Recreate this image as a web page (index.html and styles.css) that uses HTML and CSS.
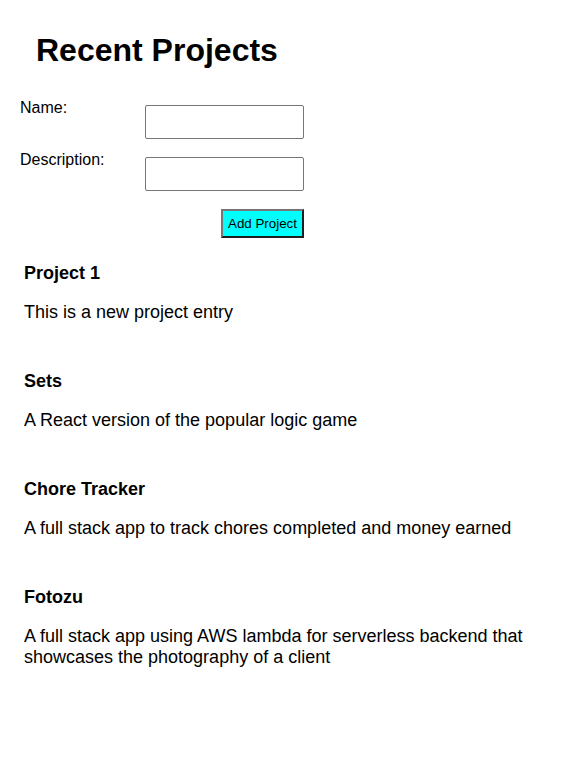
FILE: index.html
```html
<!DOCTYPE html>
<html>
<head>
<meta charset="utf-8">
<title>Recent Projects</title>
<link rel="stylesheet" href="styles.css">
</head>
<body>
<div class="app">
  <h1 class="title">Recent Projects</h1>
  <form class="form">
    <div class="row">
      <label class="label" for="name">Name:</label>
      <input class="field" id="name" type="text">
    </div>
    <div class="row">
      <label class="label" for="desc">Description:</label>
      <input class="field" id="desc" type="text">
    </div>
    <div class="actions">
      <button class="add" type="button">Add Project</button>
    </div>
  </form>
  <div class="projects">
    <div class="project">
      <h3 class="project-name">Project 1</h3>
      <p class="project-desc">This is a new project entry</p>
    </div>
    <div class="project">
      <h3 class="project-name">Sets</h3>
      <p class="project-desc">A React version of the popular logic game</p>
    </div>
    <div class="project">
      <h3 class="project-name">Chore Tracker</h3>
      <p class="project-desc">A full stack app to track chores completed and money earned</p>
    </div>
    <div class="project">
      <h3 class="project-name">Fotozu</h3>
      <p class="project-desc">A full stack app using AWS lambda for serverless backend that showcases the photography of a client</p>
    </div>
  </div>
</div>
</body>
</html>
```

FILE: styles.css
```css
html, body {
  background: #ffffff;
}
body {
  margin: 8px;
  font-family: "Liberation Sans", Arial, sans-serif;
  color: #000000;
}
.app {
  display: flex;
  flex-direction: column;
}
.title {
  font-size: 32px;
  font-weight: bold;
  margin: 24px 0 0 28px;
}
.form {
  display: flex;
  flex-direction: column;
  margin: 30px 0 0 12px;
  width: 284px;
}
.row {
  display: flex;
  align-items: flex-start;
  height: 52px;
}
.label {
  width: 125px;
  font-size: 16px;
}
.field {
  box-sizing: border-box;
  width: 159px;
  height: 34px;
  margin: 6px 0 0 1px;
  border: 1px solid #767676;
  border-radius: 2px;
  padding: 1px 2px;
  font-family: "Liberation Sans", Arial, sans-serif;
  background: #fff;
}
.actions {
  display: flex;
  justify-content: flex-end;
  margin-top: 6px;
}
.add {
  box-sizing: border-box;
  width: 83px;
  height: 29px;
  padding: 0;
  background: #00ffff;
  border: 2px solid;
  border-color: #767676 #1f1f1f #1f1f1f #767676;
  font-family: "Liberation Sans", Arial, sans-serif;
  font-size: 13.33px;
  color: #000;
}
.projects {
  display: flex;
  flex-direction: column;
  gap: 48px;
  margin: 25px 16px 0 16px;
}
.project-name {
  font-size: 18px;
  font-weight: bold;
  margin: 0;
}
.project-desc {
  font-size: 18px;
  margin: 18px 0 0 0;
}
```
